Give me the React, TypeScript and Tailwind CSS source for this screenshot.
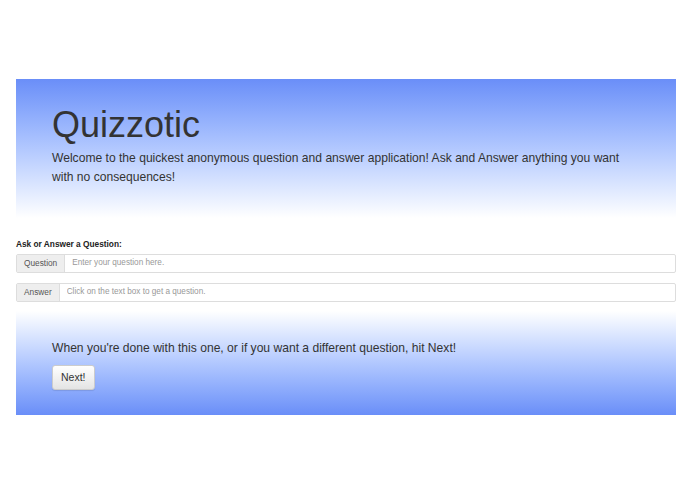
import { useState } from "react";

export default function App() {
	const [question, setQuestion] = useState("");
	const [answer, setAnswer] = useState("");

	return (
		<div className="min-h-screen bg-white pt-[79px] font-['Liberation_Sans',Arial,sans-serif] text-[#333]">
			<div className="ml-4 mr-[19px]">
				{/* header jumbotron */}
				<div className="h-[139px] bg-gradient-to-b from-[#6a8ef8] to-white px-9 pt-[25px]">
					<h1 className="text-[36px] leading-[42px] font-normal">Quizzotic</h1>
					<p className="mt-[3px] text-[12.1px] leading-[19px]">
						Welcome to the quickest anonymous question and answer application! Ask and Answer anything you want with no consequences!
					</p>
				</div>

				<form className="mt-[21px]" onSubmit={(e) => e.preventDefault()}>
					<label className="block text-[8.3px] leading-[10px] font-bold text-[#222]">Ask or Answer a Question:</label>
					<div className="mt-[5px] flex h-[19px] rounded-[2px] border border-[#ddd]">
						<span className="flex items-center bg-[#eee] border-r border-[#ddd] px-[7px] text-[8.3px] text-[#555]">Question</span>
						<input
							className="flex-1 px-[7px] text-[8.2px] text-[#555] placeholder:text-[#999] outline-none"
							placeholder="Enter your question here."
							value={question}
							onChange={(e) => setQuestion(e.target.value)}
						/>
					</div>
					<div className="mt-[10px] flex h-[19px] rounded-[2px] border border-[#ddd]">
						<span className="flex items-center bg-[#eee] border-r border-[#ddd] px-[7px] text-[8.3px] text-[#555]">Answer</span>
						<input
							className="flex-1 px-[7px] text-[8.2px] text-[#555] placeholder:text-[#999] outline-none"
							placeholder="Click on the text box to get a question."
							value={answer}
							onChange={(e) => setAnswer(e.target.value)}
						/>
					</div>
				</form>

				{/* footer jumbotron */}
				<div className="mt-[9px] h-[104px] bg-gradient-to-b from-white to-[#6a8ef8] px-9 pt-[29px]">
					<p className="text-[12.1px] leading-[17px]">When you're done with this one, or if you want a different question, hit Next!</p>
					<button className="mt-[8px] h-[25px] rounded-[3px] border border-[#ccc] bg-gradient-to-b from-white to-[#e4e4e4] px-[8px] text-[10.5px] text-[#333] shadow-[0_1px_1px_rgba(0,0,0,0.1)]">
						Next!
					</button>
				</div>
			</div>
		</div>
	);
}
